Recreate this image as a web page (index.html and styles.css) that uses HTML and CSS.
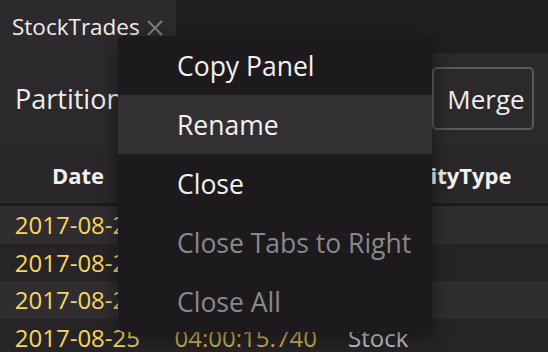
FILE: index.html
```html
<!DOCTYPE html>
<html lang="en">
<head>
    <meta charset="UTF-8">
    <title>StockTrades</title>
    <link rel="stylesheet" href="styles.css">
</head>
<body>
    <div class="tab-bar">
        <div class="tab">
            <span class="tab-title">StockTrades</span>
            <svg class="tab-close" width="18" height="18" viewBox="0 0 18 18">
                <path d="M2 2 L16 16 M16 2 L2 16" stroke="#807e81" stroke-width="2" fill="none"/>
            </svg>
        </div>
    </div>

    <div class="panel">
        <div class="toolbar">
            <span class="toolbar-label">Partition</span>
            <span class="toolbar-tick"></span>
            <button class="merge-button">Merge</button>
        </div>

        <div class="grid">
            <div class="grid-header">
                <div class="col col-date">Date</div>
                <div class="col col-time">Timestamp</div>
                <div class="col col-type">SecurityType</div>
            </div>
            <div class="grid-row">
                <div class="col col-date">2017-08-25</div>
                <div class="col col-time">04:00:15.740</div>
                <div class="col col-type">Stock</div>
            </div>
            <div class="grid-row">
                <div class="col col-date">2017-08-25</div>
                <div class="col col-time">04:00:15.740</div>
                <div class="col col-type">Stock</div>
            </div>
            <div class="grid-row">
                <div class="col col-date">2017-08-25</div>
                <div class="col col-time">04:00:15.740</div>
                <div class="col col-type">Stock</div>
            </div>
            <div class="grid-row">
                <div class="col col-date">2017-08-25</div>
                <div class="col col-time">04:00:15.740</div>
                <div class="col col-type">Stock</div>
            </div>
        </div>
    </div>

    <!-- context menu for the tab -->
    <div class="context-menu">
        <div class="menu-item">Copy Panel</div>
        <div class="menu-item active">Rename</div>
        <div class="menu-item">Close</div>
        <div class="menu-item disabled">Close Tabs to Right</div>
        <div class="menu-item disabled">Close All</div>
    </div>
</body>
</html>
```

FILE: styles.css
```css
* {
    margin: 0;
    padding: 0;
    box-sizing: border-box;
    font-family: "Open Sans", "Noto Sans", sans-serif;
}

body {
    background: #2c2a2d;
    color: #f0f0ee;
    overflow: hidden;
    block-size: 352px;
}

.tab-bar {
    display: flex;
    block-size: 53px;
    background: #201e21;
}

.tab {
    display: flex;
    align-items: center;
    gap: 6px;
    inline-size: 176px;
    padding: 0 12px;
    background: #2c2a2d;
}

.tab-title {
    font-size: 22.5px;
    color: #efeeec;
}

.tab-close {
    flex: none;
    margin-block-start: 2px;
}

.panel {
    background: #2b292c;
}

.toolbar {
    display: flex;
    align-items: center;
    block-size: 93px;
    padding: 0 14px 0 15px;
}

.toolbar-label {
    font-size: 27px;
    color: #efeeec;
    margin-block-start: -2px;
}

.toolbar-tick {
    margin-inline-start: auto;
    inline-size: 3px;
    block-size: 2px;
    background: #b0afb0;
    margin-inline-end: -1px;
}

.merge-button {
    inline-size: 102px;
    block-size: 63px;
    padding-inline-start: 6px;
    font-size: 26px;
    color: #efeeec;
    background: transparent;
    border: 2px solid #5a585b;
    border-radius: 5px;
    margin-block-start: -2px;
}

.grid-header,
.grid-row {
    display: grid;
    grid-template-columns: 156px 177px 1fr;
    align-items: center;
}

.grid-header {
    block-size: 60px;
    background: #29272a;
    border-block-end: 3px solid #1c1a1d;
    font-size: 22px;
    font-weight: 700;
}

.grid-header .col {
    text-align: center;
}

.grid-row {
    block-size: 37.6px;
    font-size: 24px;
    background: #2f2d30;
}

.grid-row:nth-child(odd) {
    background: #262427;
}

.grid-row .col-date,
.grid-row .col-time {
    text-align: end;
    padding-inline-end: 16px;
    color: #f9d55d;
}

.grid-row .col-time {
    color: #cfb04f;
}

.grid-row .col-type {
    padding-inline-start: 15px;
    color: #c9c8c9;
}

.context-menu {
    position: absolute;
    inset-inline-start: 118px;
    inset-block-start: 36px;
    inline-size: 314px;
    background: #1c1a1d;
    border-radius: 6px;
    box-shadow: 0 6px 20px rgba(0, 0, 0, 0.45);
    overflow: hidden;
}

.menu-item {
    block-size: 59.2px;
    display: flex;
    align-items: center;
    padding-inline-start: 59px;
    font-size: 26.5px;
    color: #f2f1ef;
}

.menu-item.active {
    background: #323033;
}

.menu-item.disabled {
    color: #8a888b;
}
```
